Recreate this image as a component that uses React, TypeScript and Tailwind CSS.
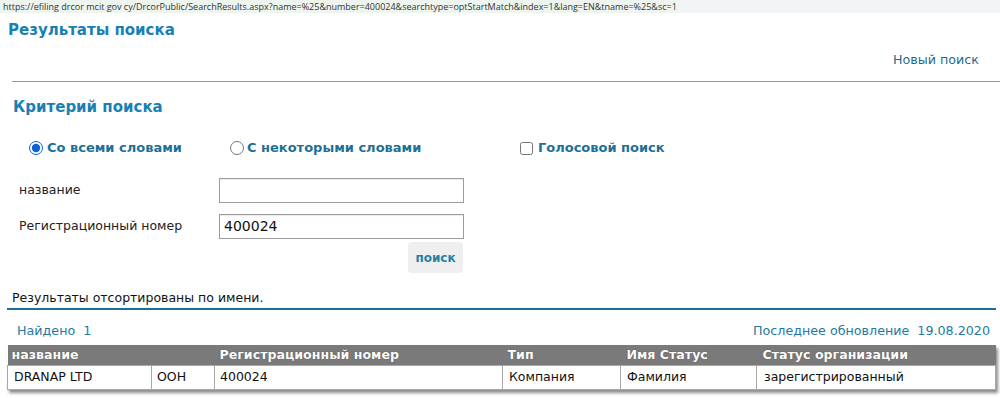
import React from "react";

const F = { fontFamily: '"DejaVu Sans", Verdana, sans-serif' };

export default function App() {
  return (
    <div className="w-[1000px] h-[398px] bg-white overflow-hidden relative" style={F}>
      {/* URL bar */}
      <div className="h-[13px] flex bg-[#f3f4f7]">
        <div
          className="bg-[#eef5ee] pl-[3px] pr-[3px] text-[9px] leading-[13px] text-[#333] whitespace-nowrap"
          style={{ fontFamily: '"Open Sans", "Noto Sans", sans-serif' }}
        >
          https://efiling drcor mcit gov cy/DrcorPublic/SearchResults.aspx?name=%25&amp;number=400024&amp;searchtype=optStartMatch&amp;index=1&amp;lang=EN&amp;tname=%25&amp;sc=1
        </div>
      </div>

      {/* Title */}
      <div className="pl-[8px] pt-[8px] h-[36px] text-[15px] leading-[18px] font-bold text-[#1a80b3]">
        Результаты поиска
      </div>

      {/* New search link */}
      <div className="flex justify-end pr-[21px] h-[22px] text-[12.7px] leading-[22px] text-[#1f6b8c]">
        Новый поиск
      </div>

      {/* HR */}
      <div className="mt-[10px] ml-[12px] h-px bg-[#9a9a9a]" />

      {/* Criteria title */}
      <div className="pl-[13px] pt-[16px] h-[53px] text-[15px] leading-[18px] font-bold text-[#1a80b3]">
        Критерий поиска
      </div>

      {/* Options */}
      <div className="flex items-center h-[26px] text-[13px] font-bold text-[#1d7096]">
        <div className="flex items-center ml-[29px] w-[201px]">
          <input type="radio" readOnly checked className="w-[14px] h-[14px] m-0 mr-[4px] accent-[#0a63d6]" />
          <span>Со всеми словами</span>
        </div>
        <div className="flex items-center w-[290px]">
          <input type="radio" readOnly checked={false} className="w-[14px] h-[14px] m-0 mr-[3px]" />
          <span>С некоторыми словами</span>
        </div>
        <div className="flex items-center">
          <input type="checkbox" readOnly checked={false} className="w-[13px] h-[13px] m-0 mr-[5px]" />
          <span>Голосовой поиск</span>
        </div>
      </div>

      {/* Fields */}
      <div className="mt-[17px] flex flex-col gap-[11px]">
        <div className="flex items-center">
          <div className="pl-[19px] w-[219px] text-[12.5px] text-[#222]">название</div>
          <div className="w-[245px] h-[25px] border border-[#9c9c9c] shadow-[inset_0_1px_1px_rgba(0,0,0,0.08)]" />
        </div>
        <div className="flex items-center">
          <div className="pl-[19px] w-[219px] text-[12.5px] text-[#222]">Регистрационный номер</div>
          <div className="w-[245px] h-[25px] border border-[#9c9c9c] pl-[4px] text-[14px] leading-[23px] text-[#111] shadow-[inset_0_1px_1px_rgba(0,0,0,0.08)]">
            400024
          </div>
        </div>
      </div>

      {/* Button */}
      <div className="flex mt-[3px]">
        <div className="ml-[408px] w-[55px] h-[31px] rounded-[4px] bg-[#efefef] flex items-center justify-center text-[12px] font-bold text-[#2a7fa3]">
          поиск
        </div>
      </div>

      {/* Sorted */}
      <div className="pl-[12px] mt-[17px] text-[12.5px] leading-[16px] text-[#111]">
        Результаты отсортированы по имени.
      </div>
      <div className="ml-[7px] w-[989px] h-[2px] mt-[2px] bg-[#1b6f92]" />

      {/* Found / last update */}
      <div className="flex justify-between pl-[17px] pr-[10px] mt-[13px] text-[12.7px] leading-[16px] text-[#237aa0]">
        <span>Найдено&nbsp;&nbsp;1</span>
        <span>Последнее обновление&nbsp;&nbsp;19.08.2020</span>
      </div>

      {/* Table */}
      <div className="ml-[7px] mt-[6px] w-[989px] shadow-[2px_3px_3px_rgba(0,0,0,0.45)]">
        <table className="w-full border-collapse text-[12.5px]">
          <thead>
            <tr className="bg-[#7a7a7a] text-white font-bold h-[20px] leading-[18px] text-[12.6px]">
              <td colSpan={2} className="pl-[4px] [text-shadow:0_0_1px_rgba(0,0,0,0.5)]">название</td>
              <td className="pl-[5px] w-[288px] [text-shadow:0_0_1px_rgba(0,0,0,0.5)]">Регистрационный номер</td>
              <td className="pl-[5px] w-[118px] [text-shadow:0_0_1px_rgba(0,0,0,0.5)]">Тип</td>
              <td className="pl-[6px] w-[136px] [text-shadow:0_0_1px_rgba(0,0,0,0.5)]">Имя Статус</td>
              <td className="pl-[6px] [text-shadow:0_0_1px_rgba(0,0,0,0.5)]">Статус организации</td>
            </tr>
          </thead>
          <tbody>
            <tr className="h-[24px] text-[#111]">
              <td className="pl-[6px] w-[144px] border border-[#a8a8a8]">DRANAP LTD</td>
              <td className="pl-[5px] w-[63px] border border-[#a8a8a8]">OOH</td>
              <td className="pl-[5px] border border-[#a8a8a8]">400024</td>
              <td className="pl-[6px] border border-[#a8a8a8]">Компания</td>
              <td className="pl-[6px] border border-[#a8a8a8]">Фамилия</td>
              <td className="pl-[7px] border border-[#a8a8a8]">зарегистрированный</td>
            </tr>
          </tbody>
        </table>
      </div>
    </div>
  );
}
